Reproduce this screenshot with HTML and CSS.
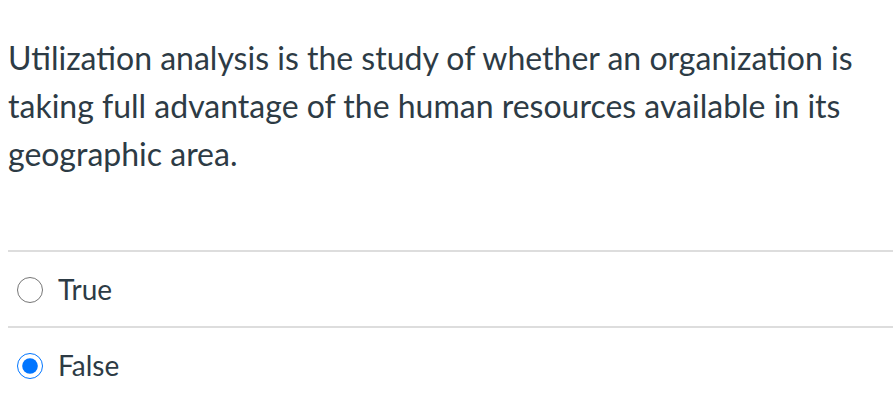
FILE: index.html
```html
<!DOCTYPE html>
<html>
<head>
<meta charset="utf-8">
<link rel="stylesheet" href="styles.css">
</head>
<body>
<div class="question">
  <div class="question-text">Utilization analysis is the study of whether an organization is taking full advantage of the human resources available in its geographic area.</div>
  <div class="answers">
    <label class="answer"><input type="radio" name="a" class="radio"><span class="answer-label">True</span></label>
    <label class="answer"><input type="radio" name="a" class="radio" checked><span class="answer-label">False</span></label>
  </div>
</div>
</body>
</html>
```
FILE: styles.css
```css
html, body {
  margin: 0;
  padding: 0;
  background: #ffffff;
}
body {
  font-family: Lato, "Open Sans", sans-serif;
  color: #2d3b45;
}
.question {
  padding: 34px 0 0 8px;
}
.question-text {
  font-size: 32px;
  line-height: 48px;
  width: 870px;
}
.answers {
  margin-top: 72px;
  border-top: 2px solid #dddddd;
}
.answer {
  display: flex;
  align-items: center;
  height: 74px;
  border-bottom: 2px solid #dddddd;
  gap: 15px;
}
.answer:last-child {
  border-bottom: none;
}
.radio {
  width: 26px;
  height: 26px;
  margin: 2px 0 0 9px;
}
.answer-label {
  font-size: 28px;
}
```
